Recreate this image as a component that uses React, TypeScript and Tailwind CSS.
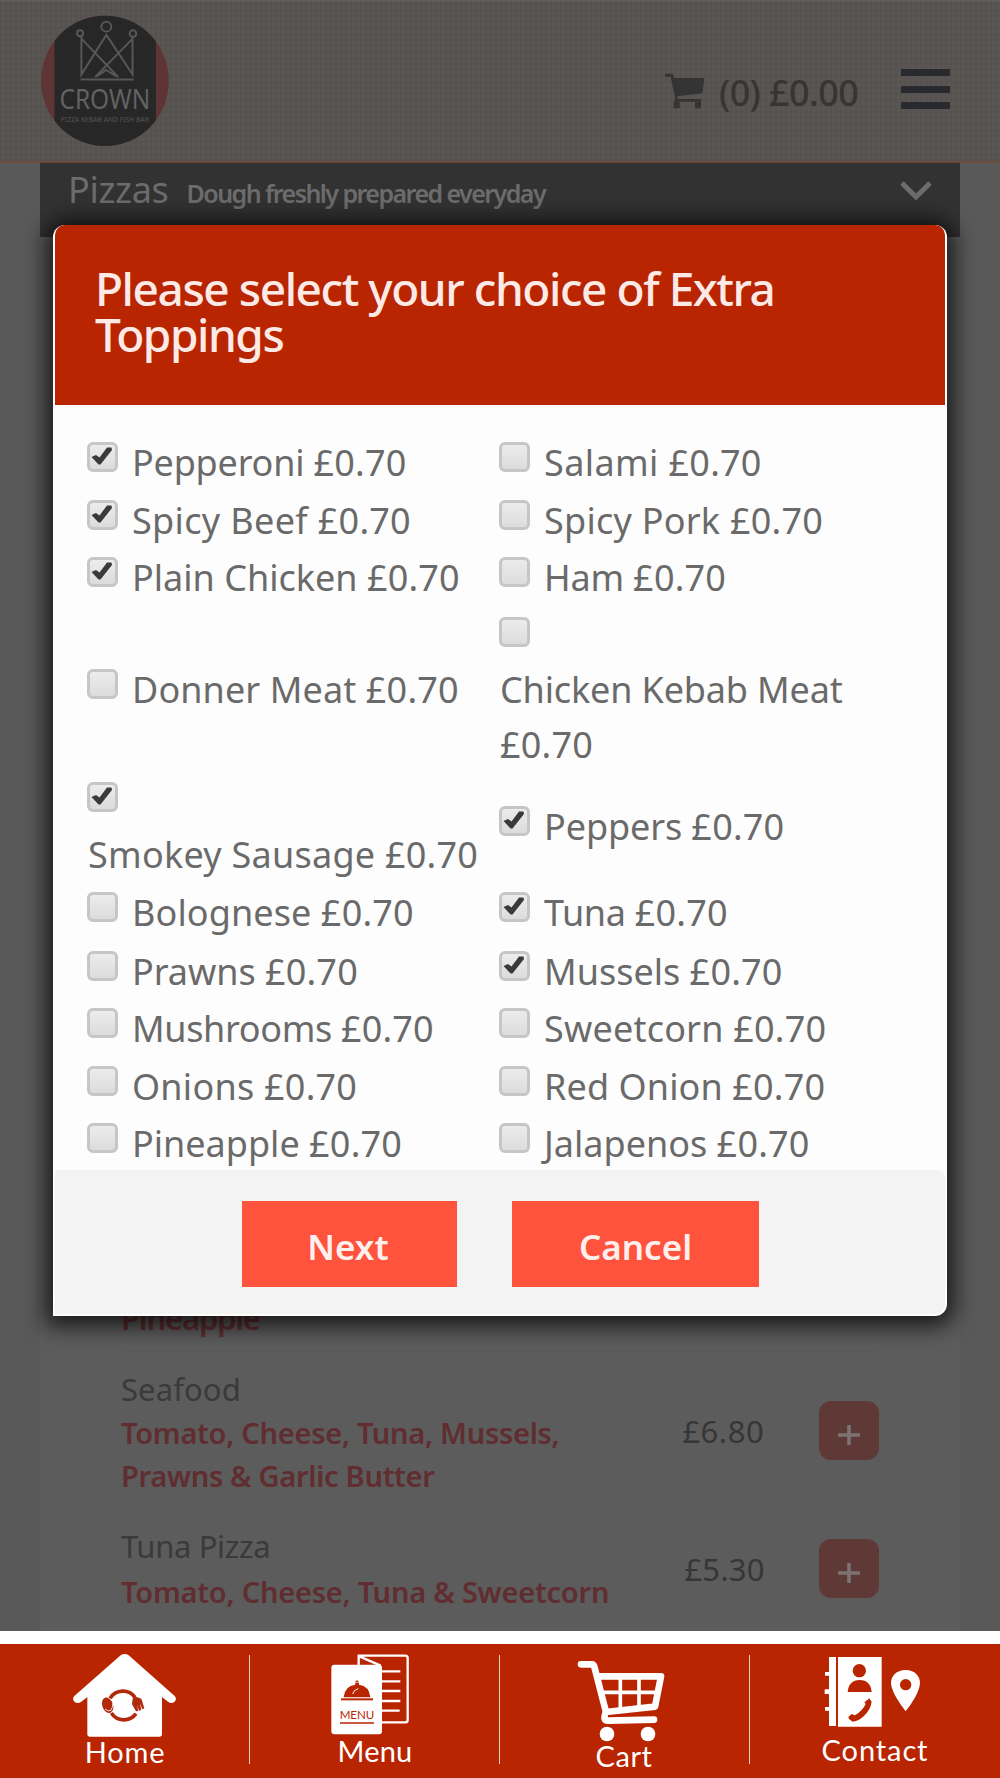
import { useState } from "react"

const NOTO = "font-['Noto_Sans','Open_Sans',sans-serif]"

const initialToppings = [
  { name: "Pepperoni", checked: true, tracking: "tracking-[-0.2px]" },
  { name: "Salami", checked: false, tracking: "tracking-[0.4px]" },
  { name: "Spicy Beef", checked: true, tracking: "tracking-[0.35px]" },
  { name: "Spicy Pork", checked: false, tracking: "tracking-[0.25px]" },
  { name: "Plain Chicken", checked: true, tracking: "tracking-normal" },
  { name: "Ham", checked: false, tracking: "tracking-[-0.2px]" },
  { name: "Donner Meat", checked: false, tracking: "tracking-[0.1px]" },
  { name: "Chicken Kebab Meat", checked: false, wrap: true, tracking: "tracking-[-0.15px]" },
  { name: "Smokey Sausage", checked: true, wrap: true, tracking: "tracking-[0.25px]" },
  { name: "Peppers", checked: true, tracking: "tracking-[-0.1px]" },
  { name: "Bolognese", checked: false, tracking: "tracking-[0.1px]" },
  { name: "Tuna", checked: true, tracking: "tracking-[-0.3px]" },
  { name: "Prawns", checked: false, tracking: "tracking-[-0.05px]" },
  { name: "Mussels", checked: true, tracking: "tracking-normal" },
  { name: "Mushrooms", checked: false, tracking: "tracking-[-0.35px]" },
  { name: "Sweetcorn", checked: false, tracking: "tracking-[0.2px]" },
  { name: "Onions", checked: false, tracking: "tracking-[0.25px]" },
  { name: "Red Onion", checked: false, tracking: "tracking-[0.1px]" },
  { name: "Pineapple", checked: false, tracking: "tracking-normal" },
  { name: "Jalapenos", checked: false, tracking: "tracking-normal" },
]

function Checkbox({ checked, onClick }: { checked: boolean; onClick: () => void }) {
  return (
    <button
      type="button"
      role="checkbox"
      aria-checked={checked}
      onClick={onClick}
      className="block h-[30px] w-[31px] shrink-0 rounded-[6px] border-[3px] border-[#c6c6c6] bg-linear-to-b from-[#ececec] to-[#dcdcdc]"
    >
      {checked && (
        <svg viewBox="0 0 25 24" className="block h-6 w-[25px] overflow-visible" fill="#3a3a3a">
          <path d="M1.500 12 6 10 9.500 12.500 17 2.500 21.500 2.500 22 5 10.500 19.500 8.500 19.500Z" />
        </svg>
      )}
    </button>
  )
}

function Topping({ item, onToggle }: { item: any; onToggle: () => void }) {
  if (item.wrap) {
    return (
      <div className="flex flex-col items-start self-start pt-[10px]">
        <Checkbox checked={item.checked} onClick={onToggle} />
        <p className={`mt-[15px] whitespace-nowrap pl-px leading-[55px] ${item.tracking}`}>
          {item.name}
          {item.name.length > 15 ? <br /> : " "}
          <span className="tracking-[0.2px]">£0.70</span>
        </p>
      </div>
    )
  }
  return (
    <div className="flex h-[57px] items-start">
      <div className="pt-[8px]">
        <Checkbox checked={item.checked} onClick={onToggle} />
      </div>
      <p className={`ml-[14px] whitespace-nowrap leading-[57px] ${item.tracking}`}>
        {item.name} <span className="tracking-[0.2px]">£0.70</span>
      </p>
    </div>
  )
}

function Logo() {
  return (
    <svg viewBox="120 40 390 400" className="h-[133px] w-[130px]">
      <clipPath id="badge">
        <ellipse cx="315" cy="241" rx="192" ry="196" />
      </clipPath>
      <g clipPath="url(#badge)">
        <path d="M120 40H510V440H120Z" fill="#5f3434" />
        <path d="M163 40H468V440H163Z" fill="#272727" />
      </g>
      <g fill="none" stroke="#575757" strokeWidth="6">
        <circle cx="319" cy="78" r="15" />
        <circle cx="240" cy="98" r="9" />
        <circle cx="399" cy="99" r="10" />
        <path d="M244 108V222L319 103 398 222V108M244 114 355 230M398 114 285 230M290 228 318 208 350 228M242 237H402" />
      </g>
      <text x="178" y="326" textLength="273" lengthAdjust="spacingAndGlyphs" fontFamily="Noto Sans, sans-serif" fontSize="83" fill="#626262">CROWN</text>
      <text x="182" y="364" textLength="265" lengthAdjust="spacingAndGlyphs" fontFamily="Noto Sans, sans-serif" fontSize="24" fill="#555">PIZZA KEBAB AND FISH BAR</text>
    </svg>
  )
}

function Header() {
  return (
    <header className="flex h-[163px] justify-between border-t border-b-2 border-t-[#62605e] border-b-[#6b4b3a] bg-[#595653] bg-[repeating-linear-gradient(90deg,rgba(0,0,0,0.04)_0_2px,transparent_2px_5px),repeating-linear-gradient(0deg,rgba(0,0,0,0.03)_0_2px,transparent_2px_6px)] pl-10 pr-[50px]">
      <div className="pt-[13px]">
        <Logo />
      </div>
      <div className="flex">
        <svg viewBox="492 220 120 108" className="mt-[72px] h-9 w-10" fill="#343434">
          <path d="M492 222H512Q518 222 519 235H610L604 281 529 290 530 298H600V306H520L522 294 509 231H492Z" />
          <path d="M518 306H536V326H518ZM582 306H600V326H582Z" />
        </svg>
        <span className="ml-[14px] mt-[63px] w-[182px] whitespace-nowrap text-[36px] font-medium leading-[57px] tracking-[-0.6px] text-[#353535]">(0) £0.00</span>
        <div className="mt-[68px] flex h-[40px] w-[49px] flex-col justify-between">
          <i className="h-[7px] bg-[#292a30]" />
          <i className="h-[7px] bg-[#292a30]" />
          <i className="h-[7px] bg-[#292a30]" />
        </div>
      </div>
    </header>
  )
}

function AddButton() {
  return (
    <button className="flex h-[59px] w-[60px] items-center justify-center rounded-[12px] bg-[#5f3936]">
      <svg viewBox="0 0 22 20" className="mt-2 h-5 w-[22px]" stroke="#7c7473" strokeWidth="3.6">
        <path d="M0 10H22M11 0V20" />
      </svg>
    </button>
  )
}

function MenuList() {
  return (
    <section className="mx-10 h-[1468px] bg-[#5c5c5c]">
      <div className="flex h-[74px] justify-between bg-[#323232] pl-7 pr-[28px] text-[#6c6c6c]">
        <p className="whitespace-nowrap leading-[54px]">
          <span className="text-[36px] tracking-[-0.3px]">Pizzas</span>
          <span className="ml-[18px] text-[25px] font-semibold tracking-[-1.55px]">Dough freshly prepared everyday</span>
        </p>
        <svg viewBox="0 0 32 20" className="mt-[18px] h-5 w-8" fill="none" stroke="#6c6c6c" strokeWidth="5">
          <path d="M2 2 16 16 30 2" />
        </svg>
      </div>
      <div className="px-[81px] text-[31px] leading-[43px]">
        <div className="h-[1115px] border-b border-[#595959] pt-[1060px] font-semibold tracking-[-1.2px] text-[#602d30]">Pineapple</div>
        <div className="flex h-[157px] border-b border-[#595959]">
          <div className="w-[563px] whitespace-nowrap pt-[16px]">
            <p className="tracking-[0.1px] text-[#3a3a3a]">Seafood</p>
            <p className="text-[29px] font-semibold tracking-[-0.27px] text-[#602d30]">Tomato, Cheese, Tuna, Mussels,</p>
            <p className="text-[29px] font-semibold tracking-[-0.3px] text-[#602d30]">Prawns & Garlic Butter</p>
          </div>
          <span className="w-[137px] pt-[58px] tracking-[0.5px] text-[#363636]">£6.80</span>
          <div className="pt-[49px]">
            <AddButton />
          </div>
        </div>
        <div className="flex">
          <div className="w-[565px] whitespace-nowrap pt-[16px]">
            <p className="tracking-[-0.35px] text-[#3a3a3a]">Tuna Pizza</p>
            <p className="mt-[2px] text-[29px] font-semibold tracking-[-0.22px] text-[#602d30]">Tomato, Cheese, Tuna & Sweetcorn</p>
          </div>
          <span className="w-[135px] pt-[39px] tracking-[0.2px] text-[#363636]">£5.30</span>
          <div className="pt-[30px]">
            <AddButton />
          </div>
        </div>
      </div>
    </section>
  )
}

function ToppingsModal() {
  const [toppings, setToppings] = useState<any[]>(initialToppings)

  const toggle = (name: string) =>
    setToppings(toppings.map((t) => (t.name === name ? { ...t, checked: !t.checked } : t)))

  return (
    <div className="absolute left-[53px] top-[225px] h-[1091px] w-[894px] rounded-[12px] rounded-bl-none bg-[#fdfdfd] px-[2px] shadow-[0_3px_22px_7px_rgba(0,0,0,0.75)]">
      <div className="h-[180px] rounded-t-[10px] bg-[#b82500] pl-[40px] pt-[40px]">
        <h2 className="whitespace-nowrap text-[46px] font-medium leading-[46px] tracking-[-1.45px] text-[#fdeae6]">
          Please select your choice of Extra
          <br />
          Toppings
        </h2>
      </div>
      <div className="grid h-[765px] grid-cols-[412px_1fr] grid-rows-[57.5px_57.5px_57.5px_165px_110.5px_61px_57.3px_57.3px_57.3px_57px] items-center pl-8 pt-[29px] text-[36px] text-[#6a6a6a]">
        {toppings.map((item) => (
          <Topping key={item.name} item={item} onToggle={() => toggle(item.name)} />
        ))}
      </div>
      <div className="flex h-[144px] gap-[55px] rounded-br-[10px] rounded-tr-[8px] bg-[#f3f3f3] pl-[187px] pt-[31px] text-[35px] font-semibold text-[#fff0ed]">
        <button className="h-[86px] w-[215px] bg-[#ff533d] pr-[3px] pt-[6px]">Next</button>
        <button className="h-[86px] w-[247px] bg-[#ff533d] pt-[6px]">Cancel</button>
      </div>
    </div>
  )
}

function HomeIcon() {
  return (
    <svg viewBox="0 72 750 279" className="h-[93px] w-[250px] overflow-visible">
      <path d="M362 106Q374 98 386 106L524 228Q532 238 523 246 514 252 504 245L486 231V342Q486 350 478 350H270Q262 350 262 342V231L244 245Q234 252 224 246 215 238 223 228Z" fill="#fff" />
      <g fill="none" stroke="#b02a0c" strokeWidth="11">
        <path d="M330 235A45 45 0 0 1 405 232M334 279A45 45 0 0 0 408 281" />
      </g>
      <g fill="#b02a0c">
        <ellipse cx="323" cy="256" rx="16" ry="24" transform="rotate(-20 323 256)" />
        <path d="M398 236 404 229 424 236 433 265 427 268 420 250 424 270 417 272 411 254 415 273 408 274 396 253Z" />
      </g>
      <path d="M315 267Q325 277 335 270M338 250Q340 262 333 269" fill="none" stroke="#fff" strokeWidth="2.5" />
    </svg>
  )
}

function MenuIcon() {
  return (
    <svg viewBox="250 72 750 276" className="h-[92px] w-[250px] overflow-visible">
      <g transform="translate(-500 0)">
        <path d="M1076 138V107H1216Q1223 107 1223 114V300Q1223 307 1216 307H1144M1078 109 1142 137" fill="none" stroke="#fff" strokeWidth="7" />
        <path d="M1003 134H1137Q1146 134 1146 143V334Q1146 343 1137 343H1003Q994 343 994 334V143Q994 134 1003 134Z" fill="#fff" />
        <path d="M1146 154H1201M1146 184H1201M1146 213H1201M1146 243H1201M1146 272H1199" stroke="#fff" strokeWidth="7" />
        <path d="M1031 232Q1034 197 1066 194 1064 183 1071 181 1078 183 1077 194 1108 198 1111 232Z" fill="#b82500" />
        <path d="M1064 187H1078" stroke="#fff" strokeWidth="2" />
        <path d="M1058 222Q1061 209 1075 206" fill="none" stroke="#fff" strokeWidth="3" />
        <path d="M1023 238H1119" stroke="#b82500" strokeWidth="6" />
        <path d="M1020 309H1122" stroke="#b82500" strokeWidth="5" />
        <text x="1019" y="298" textLength="104" lengthAdjust="spacingAndGlyphs" fontFamily="Lato, sans-serif" fontSize="37" fill="#b82500">MENU</text>
      </g>
    </svg>
  )
}

function CartIcon() {
  return (
    <svg viewBox="0 72 750 291" className="h-[97px] w-[250px] overflow-visible">
      <g fill="none" stroke="#fff" strokeLinecap="round" strokeLinejoin="round">
        <path d="M243 133H276Q281 133 283 140L318 276" strokeWidth="20" />
        <path d="M295 169H483L465 260 318 276Q306 303 326 302L462 299" strokeWidth="20" />
        <path d="M361 175V265M417 175V260M302 217H472" strokeWidth="11" />
      </g>
      <circle cx="321" cy="342" r="22" fill="#fff" />
      <circle cx="444" cy="342" r="22" fill="#fff" />
    </svg>
  )
}

function ContactIcon() {
  return (
    <svg viewBox="750 72 750 273" className="h-[91px] w-[250px] overflow-visible">
      <path d="M987 111H1008V318H987V272H975V261H987V222H974V208H987V167H975V156H987ZM1014 111H1145V320H1014Z" fill="#fff" />
      <g fill="#b82500">
        <circle cx="1078" cy="152" r="20" />
        <path d="M1043 216Q1046 181 1079 180 1112 181 1115 216Z" />
        <path d="M1102 240 1108 235 1115 245Q1112 268 1091 289 1073 305 1058 305L1047 297 1045 291 1055 282 1065 286Q1088 272 1097 252L1093 247Z" />
      </g>
      <path fillRule="evenodd" d="M1217 150Q1238 150 1251 164 1264 180 1258 202 1250 232 1217 274 1184 232 1175 202 1169 180 1182 164 1196 150 1217 150ZM1217 177A17 17 0 1 0 1217 211 17 17 0 1 0 1217 177Z" fill="#fff" />
    </svg>
  )
}

const tabs = [
  { label: "Home", icon: <HomeIcon />, tracking: "tracking-[0.8px]" },
  { label: "Menu", icon: <MenuIcon />, tracking: "tracking-[0.2px]" },
  { label: "Cart", icon: <CartIcon />, tracking: "pr-[2px] tracking-[0.6px]" },
  { label: "Contact", icon: <ContactIcon />, tracking: "tracking-[0.9px]" },
]

function BottomNav() {
  return (
    <nav className="grid h-[147px] grid-cols-4 border-t-[13px] border-white bg-[#b82500]">
      {tabs.map((tab, i) => (
        <div key={tab.label} className="flex">
          <a className="flex w-[250px] shrink-0 flex-col items-center text-white">
            {tab.icon}
            <span className={`mt-px font-['Lato',sans-serif] text-[29px] leading-7 ${tab.tracking}`}>{tab.label}</span>
          </a>
          {i < 3 && <i className="-ml-px mt-[11px] h-[109px] w-px shrink-0 bg-[#f0cfc6]" />}
        </div>
      ))}
    </nav>
  )
}

export default function App() {
  return (
    <div className={`relative h-[1778px] w-[1000px] overflow-hidden bg-[#595959] ${NOTO}`}>
      <Header />
      <MenuList />
      <ToppingsModal />
      <div className="relative">
        <BottomNav />
      </div>
    </div>
  )
}
